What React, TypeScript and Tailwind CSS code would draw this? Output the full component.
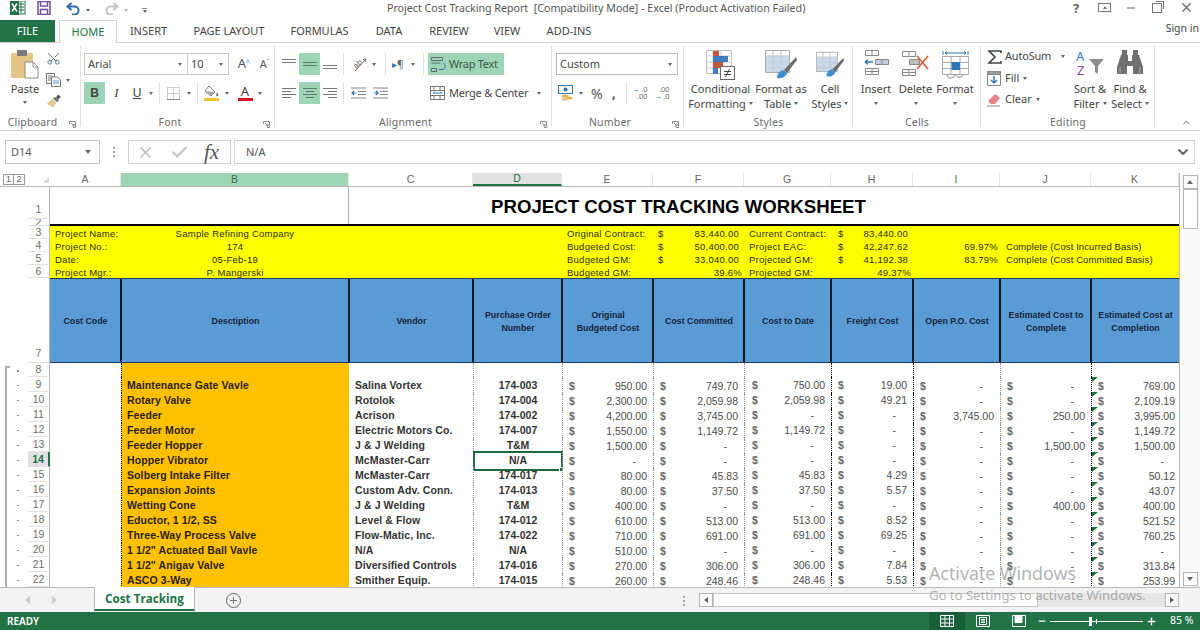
import { Scissors, ChevronUp, ChevronDown, Plus, Minus, X, Check } from 'lucide-react'
import type { ReactNode } from 'react'

const COLS = 'grid grid-cols-[71px_228px_124px_89px_91px_91px_87px_82px_87px_91px_88px] w-[1129px]'

type Row = [number, string, string, string, string, string, string, string, string, string, string]

const ROWS: Row[] = [
  [9, 'Maintenance Gate Vavle', 'Salina Vortex', '174-003', '950.00', '749.70', '750.00', '19.00', '-', '-', '769.00'],
  [10, 'Rotary Valve', 'Rotolok', '174-004', '2,300.00', '2,059.98', '2,059.98', '49.21', '-', '-', '2,109.19'],
  [11, 'Feeder', 'Acrison', '174-002', '4,200.00', '3,745.00', '-', '-', '3,745.00', '250.00', '3,995.00'],
  [12, 'Feeder Motor', 'Electric Motors Co.', '174-007', '1,550.00', '1,149.72', '1,149.72', '-', '-', '-', '1,149.72'],
  [13, 'Feeder Hopper', 'J & J Welding', 'T&M', '1,500.00', '-', '-', '-', '-', '1,500.00', '1,500.00'],
  [14, 'Hopper Vibrator', 'McMaster-Carr', 'N/A', '-', '-', '-', '-', '-', '-', '-'],
  [15, 'Solberg Intake Filter', 'McMaster-Carr', '174-017', '80.00', '45.83', '45.83', '4.29', '-', '-', '50.12'],
  [16, 'Expansion Joints', 'Custom Adv. Conn.', '174-013', '80.00', '37.50', '37.50', '5.57', '-', '-', '43.07'],
  [17, 'Wetting Cone', 'J & J Welding', 'T&M', '400.00', '-', '-', '-', '-', '400.00', '400.00'],
  [18, 'Eductor, 1 1/2, SS', 'Level & Flow', '174-012', '610.00', '513.00', '513.00', '8.52', '-', '-', '521.52'],
  [19, 'Three-Way Process Valve', 'Flow-Matic, Inc.', '174-022', '710.00', '691.00', '691.00', '69.25', '-', '-', '760.25'],
  [20, '1 1/2" Actuated Ball Vavle', 'N/A', 'N/A', '510.00', '-', '-', '-', '-', '-', '-'],
  [21, '1 1/2" Anigav Valve', 'Diversified Controls', '174-016', '270.00', '306.00', '306.00', '7.84', '-', '-', '313.84'],
  [22, 'ASCO 3-Way', 'Smither Equip.', '174-015', '260.00', '248.46', '248.46', '5.53', '-', '-', '253.99'],
]

const Caret = ({ className = '' }: { className?: string }) => (
  <span className={`inline-block w-0 h-0 border-x-[2.5px] border-x-transparent border-t-[3px] border-t-[#666] ${className}`} />
)

const Sep = ({ className = '' }: { className?: string }) => <span className={`w-px h-[22px] bg-[#e1e1e1] ${className}`} />

function Lines({ rows, w = 14, active = false }: { rows: [number, number, number][]; w?: number; active?: boolean }) {
  return (
    <svg width={w} height="14" viewBox={`0 0 ${w} 14`} stroke={active ? '#5c7a69' : '#777'} strokeWidth="1">
      {rows.map(([y, a, b]) => (
        <line key={y} x1={a} x2={b} y1={y + 0.5} y2={y + 0.5} />
      ))}
    </svg>
  )
}

function ExcelLogo() {
  return (
    <svg width="16" height="14" viewBox="0 0 16 14">
      <rect x="6" y="0" width="9" height="13" fill="#fff" stroke="#1e7145" />
      <path d="M9 3h5M9 6h5M9 9h5M11 1v11" stroke="#1e7145" />
      <rect x="0" y="0" width="9" height="14" fill="#1e7145" />
      <path d="M2 2.5l5 8M7 2.5l-5 8" stroke="#fff" strokeWidth="1.6" />
    </svg>
  )
}

function SaveIcon() {
  return (
    <svg width="14" height="14" viewBox="0 0 14 14" fill="none" stroke="#7a4f9e" strokeWidth="1.5">
      <path d="M1 0.5h12v13H1z" />
      <path d="M3.5 1v4h7V1M3.5 13V8.5h7V13" />
    </svg>
  )
}

function UndoIcon({ color }: { color: string }) {
  return (
    <svg width="15" height="13" viewBox="0 0 15 13" fill="none" stroke={color} strokeWidth="2">
      <path d="M5.5 1L1.5 4.5 5.5 8" />
      <path d="M2 4.5h6.5a4 4 0 0 1 0 8H6" />
    </svg>
  )
}

function RedoIcon() {
  return (
    <svg width="15" height="13" viewBox="0 0 15 13" fill="none" stroke="#c4c4c4" strokeWidth="2">
      <path d="M9.5 1l4 3.5-4 3.5" />
      <path d="M13 4.5H6.5a4 4 0 0 0 0 8H9" />
    </svg>
  )
}

function PasteIcon() {
  return (
    <svg width="28" height="30" viewBox="0 0 28 30">
      <rect x="0" y="3" width="22" height="25" rx="1" fill="#e6c58a" />
      <rect x="6" y="0" width="10" height="6" rx="1" fill="#7b7b7b" />
      <path d="M14 12h8l5 5v11H14z" fill="#fff" stroke="#8c8c8c" />
      <path d="M22 12v5h5" fill="none" stroke="#8c8c8c" />
    </svg>
  )
}

function CopyIcon() {
  return (
    <svg width="15" height="14" viewBox="0 0 15 14" fill="#fff" stroke="#777">
      <path d="M0.5 0.5h8v10h-8z" />
      <path d="M2 3h5M2 5h5M2 7h5" />
      <path d="M5.5 4h6l3 3v6.5h-9z" />
      <path d="M7 8h6M7 10h6" stroke="#5b9bd5" />
    </svg>
  )
}

function BrushIcon() {
  return (
    <svg width="16" height="14" viewBox="0 0 16 14">
      <path d="M9 3l4 3.5-2 1.5-4-3.5z" fill="#6b6b6b" />
      <path d="M12 0.5l3 2.5-3 2.5-2-2z" fill="#555" />
      <path d="M6.5 5l4 3.5-3.5 5L1 9.5z" fill="#e6c58a" />
    </svg>
  )
}

function BorderIcon() {
  return (
    <svg width="13" height="13" viewBox="0 0 13 13" fill="none" stroke="#9a9a9a" strokeDasharray="1 1">
      <path d="M0.5 0.5h12v12h-12zM6.5 0.5v12M0.5 6.5h12" />
      <path d="M0 12.5h13" stroke="#888" strokeDasharray="none" />
    </svg>
  )
}

function FillIcon() {
  return (
    <svg width="17" height="16" viewBox="0 0 17 16">
      <path d="M6 1l6 6-4 4-6-5z" fill="#fff" stroke="#777" />
      <path d="M2 6l10 1-4 4z" fill="#a8a8a8" />
      <path d="M14 7c1 2 2 3 1 4s-2 0-2-1z" fill="#777" />
      <rect x="1" y="13" width="15" height="3" fill="#f1c232" />
    </svg>
  )
}

function OrientIcon() {
  return (
    <svg width="16" height="16" viewBox="0 0 16 16" fill="none" stroke="#777">
      <text x="1" y="11" fontSize="8" fill="#666" stroke="none" transform="rotate(-45 5 8)" fontFamily="Liberation Sans">ab</text>
      <path d="M3 15L14 3M14 3l-3 .5M14 3l-.5 3" />
    </svg>
  )
}

function IndentIcon({ dir }: { dir: 'in' | 'out' }) {
  const arrow = dir === 'out' ? 'M5 7H1M3 5L1 7l2 2' : 'M1 7h4M3 5l2 2-2 2'
  return (
    <svg width="15" height="14" viewBox="0 0 15 14" fill="none">
      <path d="M0 2h15M7 5.5h8M7 8.5h8M0 12h15" stroke="#888" />
      <path d={arrow} stroke="#2f75b5" strokeWidth="1.2" />
    </svg>
  )
}

function WrapIcon() {
  return (
    <svg width="16" height="15" viewBox="0 0 16 15" fill="none" stroke="#5f6f66">
      <path d="M0.5 0.5h11v3h-11zM0.5 6h9M0.5 11.5h5v3h-5z" />
      <path d="M8 12.5h3c4 0 4-6.5 1-6.5" stroke="#2f75b5" />
    </svg>
  )
}

function MergeIcon() {
  return (
    <svg width="15" height="14" viewBox="0 0 15 14" fill="#fff" stroke="#777">
      <path d="M0.5 0.5h14v13h-14zM0.5 4.5h14M0.5 9.5h14M4 0.5v4M10 0.5v4M4 9.5v4M10 9.5v4" />
      <path d="M3 7h9M3 7l1.5-1M12 7l-1.5-1" stroke="#2f75b5" />
    </svg>
  )
}

function CurrencyIcon() {
  return (
    <svg width="17" height="16" viewBox="0 0 17 16">
      <rect x="0.5" y="0.5" width="14" height="8" fill="#fff" stroke="#2f75b5" />
      <circle cx="7.5" cy="4.5" r="2" fill="#2f75b5" />
      <ellipse cx="7" cy="11" rx="3.5" ry="1.6" fill="#e6b94e" />
      <ellipse cx="11" cy="13" rx="3.5" ry="1.6" fill="#e6b94e" />
      <ellipse cx="7" cy="14" rx="3.5" ry="1.6" fill="#e6c58a" />
    </svg>
  )
}

function DecimalIcon({ more }: { more?: boolean }) {
  return (
    <span className="relative flex flex-col items-end text-[7.5px] leading-[7px] text-[#666] font-['Liberation_Sans',sans-serif]">
      <span className="flex items-center">
        {more ? '' : <span className="text-[#2f75b5] mr-[1px]">←</span>}
        {more ? '.00' : '.0'}
      </span>
      <span className="flex items-center">
        {more && <span className="text-[#2f75b5] mr-[1px]">→</span>}
        {more ? '.0' : '.00'}
      </span>
    </span>
  )
}

function CondIcon() {
  return (
    <svg width="29" height="30" viewBox="0 0 29 30">
      <path d="M0.5 0.5h25v23h-25z" fill="#fff" stroke="#bdbdbd" />
      <path d="M7 0v24M15 0v24M0 6h26M0 12h26M0 18h26" stroke="#d0d0d0" />
      <rect x="7" y="1" width="6" height="5" fill="#c0583e" />
      <rect x="7" y="6" width="15" height="6" fill="#3f7cbf" />
      <rect x="7" y="12" width="10" height="6" fill="#c0583e" />
      <rect x="7" y="18" width="5" height="6" fill="#3f7cbf" />
      <rect x="14.5" y="16.5" width="14" height="13" fill="#fff" stroke="#666" />
      <path d="M18 21.5h7M18 24.5h7M23.5 19l-4 8" stroke="#444" />
    </svg>
  )
}

function TableIcon({ narrow }: { narrow?: boolean }) {
  return (
    <svg width={narrow ? 28 : 32} height="29" viewBox="0 0 32 29">
      <path d="M0.5 0.5h24v22h-24z" fill="#fff" stroke="#aaa" />
      <path d="M8 0v23M16 0v23M0 6h25M0 12h25M0 18h25" stroke="#bdbdbd" />
      <rect x="1" y="6" width="23" height="16" fill="#bfcfe4" opacity=".8" />
      <path d="M31 7L19 20l3 3L32 10z" fill="#6b6b6b" />
      <path d="M12 28c0-5 4-8 7-8l3 3c0 3-5 6-10 5z" fill="#3f8fd0" />
    </svg>
  )
}

function InsertIcon() {
  return (
    <svg width="26" height="25" viewBox="0 0 26 25" fill="none" stroke="#888">
      <path d="M2.5 0.5h13v5h-13zM9 0.5v5" />
      <path d="M12.5 9.5h13v5h-13zM19 9.5v5" fill="#bfcfe4" />
      <path d="M2.5 18.5h13v6h-13zM9 18.5v6M2.5 21.5h13" />
      <path d="M10 12H2M2 12l3-2.5M2 12l3 2.5" stroke="#2f75b5" strokeWidth="1.3" />
    </svg>
  )
}

function DeleteIcon() {
  return (
    <svg width="28" height="26" viewBox="0 0 28 26" fill="none" stroke="#888">
      <path d="M0.5 1.5h13v5h-13zM7 1.5v5" />
      <path d="M7.5 9.5h10v5h-10z" fill="#bfbfbf" />
      <path d="M0.5 19.5h13v6h-13zM7 19.5v6M0.5 22.5h13" />
      <path d="M15 6l11 13M26 6L15 19" stroke="#d2603a" strokeWidth="1.7" />
    </svg>
  )
}

function FormatIcon() {
  return (
    <svg width="27" height="29" viewBox="0 0 27 29" fill="none" stroke="#aaa">
      <path d="M0.5 6.5h26v18h-26zM9 6.5v18M18 6.5v18M0.5 12.5h26M0.5 18.5h26" />
      <rect x="9.5" y="12" width="8.5" height="8" fill="#2f75b5" stroke="none" />
      <path d="M1 1v4M26 1v4M3 3h21M3 3l2-1.5M3 3l2 1.5M24 3l-2-1.5M24 3l-2 1.5" stroke="#2f75b5" />
      <path d="M5 25c0 4 7 4 8 0M14 25c0 3 6 3 7 0" stroke="#888" />
    </svg>
  )
}

function FillDownIcon() {
  return (
    <svg width="14" height="15" viewBox="0 0 14 15" fill="#fff" stroke="#888">
      <path d="M0.5 0.5h13v14h-13z" />
      <path d="M0.5 0.5h13v3h-13z" fill="#999" />
      <path d="M7 5v7M4 9l3 3 3-3" stroke="#2f75b5" strokeWidth="1.4" fill="none" />
    </svg>
  )
}

function EraserIcon() {
  return (
    <svg width="14" height="14" viewBox="0 0 14 14">
      <path d="M8 1l5 4-5 6H4L1 8z" fill="#e8838a" />
      <path d="M0 13h13" stroke="#888" />
    </svg>
  )
}

function SigmaIcon() {
  return (
    <svg width="15" height="14" viewBox="0 0 15 14" fill="none" stroke="#444" strokeWidth="1.6">
      <path d="M14 3V1H2l6 6-6 6h12v-2" />
    </svg>
  )
}

function SortIcon() {
  return (
    <svg width="29" height="26" viewBox="0 0 29 26">
      <text x="0" y="11" fontSize="13" fill="#2f75b5" fontFamily="Noto Sans">A</text>
      <text x="1" y="25" fontSize="13" fill="#7a4f9e" fontFamily="Noto Sans">Z</text>
      <path d="M13 9h15l-6 7v8l-3-2v-6z" fill="#8c8c8c" />
    </svg>
  )
}

function BinocularsIcon() {
  return (
    <svg width="26" height="25" viewBox="0 0 26 25" fill="#707070">
      <path d="M5 0h5v5H5zM16 0h5v5h-5z" />
      <path d="M4 5h7v6h4V5h7l4 12v7H16v-8h-6v8H0v-7z" />
      <path d="M3 17v6M23 17v6" stroke="#b0b0b0" />
    </svg>
  )
}

function Launcher() {
  return (
    <svg width="7" height="7" viewBox="0 0 7 7" fill="none" stroke="#888">
      <path d="M0.5 3V0.5H6.5V6.5H4M2 2l3 3M5 3v2H3" />
    </svg>
  )
}

function Group({ width, label, launcher, children }: { width: string; label: string; launcher?: boolean; children: ReactNode }) {
  return (
    <section className={`${width} shrink-0 h-full flex flex-col relative`}>
      <div className="h-[73px] pt-[5px]">{children}</div>
      <div className={`h-[13px] flex items-center justify-center text-[10.5px] text-[#6a6a6a] tracking-[0.2px] ${launcher ? 'pr-[16px]' : ''}`}>{label}</div>
      {launcher && (
        <span className="absolute right-[5px] bottom-[2px] flex">
          <Launcher />
        </span>
      )}
      <span className="absolute right-0 top-[3px] bottom-[3px] w-px bg-[#e1e1e1]" />
    </section>
  )
}

function BigButton({ width, icon, lines, caretLine }: { width: string; icon: ReactNode; lines: string[]; caretLine?: boolean }) {
  return (
    <div className={`${width} shrink-0 flex flex-col items-center text-[11px] leading-[15px] text-[#444]`}>
      <div className="h-[32px] flex items-start justify-center pt-[2px]">{icon}</div>
      <span className="mt-[1px] whitespace-nowrap">{lines[0]}</span>
      {lines[1] ? (
        <span className="whitespace-nowrap flex items-center gap-[3px]">
          {lines[1]}
          {caretLine && <Caret />}
        </span>
      ) : (
        <span className="h-[15px] flex items-center">
          <Caret />
        </span>
      )}
    </div>
  )
}

function Ribbon() {
  return (
    <div className="h-[88px] border-b border-[#d0d0d0] flex relative">
      <Group width="w-[81px]" label="Clipboard" launcher>
        <div className="flex pl-[10px] pt-[2px]">
          <div className="w-[30px] flex flex-col items-center text-[11px] text-[#444]">
            <PasteIcon />
            <span className="leading-[15px] mt-[1px]">Paste</span>
            <span className="h-[12px] flex items-center"><Caret /></span>
          </div>
          <div className="ml-[6px] flex flex-col gap-[7px] mt-[1px]">
            <Scissors size={15} strokeWidth={1.4} className="text-[#4a6a86] -rotate-90" />
            <span className="flex items-center gap-[5px]"><CopyIcon /><Caret /></span>
            <BrushIcon />
          </div>
        </div>
      </Group>
      <Group width="w-[194px]" label="Font" launcher>
        <div className="pl-[3px] pt-[5px]">
          <div className="flex items-center h-[22px]">
            <div className="w-[105px] h-[22px] border border-[#c6c6c6] flex items-center justify-between pl-[3px] pr-[5px] text-[11px] text-[#444]">Arial<Caret /></div>
            <div className="w-[41px] h-[22px] border border-l-0 border-[#c6c6c6] flex items-center justify-between pl-[3px] pr-[5px] text-[11px] text-[#444]">10<Caret /></div>
            <span className="ml-[5px] w-[21px] text-center text-[13px] text-[#555]">A<sup className="text-[7px] text-[#2f75b5]">^</sup></span>
            <span className="w-[21px] text-center text-[11px] text-[#555]">A<sup className="text-[7px] text-[#2f75b5]">ˇ</sup></span>
          </div>
          <div className="flex items-center h-[22px] mt-[7px] text-[12px] text-[#444]">
            <span className="w-[21px] h-[22px] bg-[#9fd5b7] flex items-center justify-center font-bold font-['Liberation_Sans',sans-serif]">B</span>
            <span className="w-[21px] text-center italic font-['Liberation_Serif',serif] ml-[1px] text-[13px]">I</span>
            <span className="w-[20px] text-center underline font-['Liberation_Sans',sans-serif]">U</span>
            <Caret className="ml-[2px]" />
            <Sep className="ml-[6px]" />
            <span className="ml-[7px] flex"><BorderIcon /></span>
            <Caret className="ml-[7px]" />
            <Sep className="ml-[6px]" />
            <span className="ml-[5px] flex"><FillIcon /></span>
            <Caret className="ml-[5px]" />
            <span className="ml-[8px] w-[16px] flex flex-col items-center text-[13px] leading-[11px] text-[#444]">A<span className="w-[15px] h-[3px] bg-[#e0141e] mt-[1px]" /></span>
            <Caret className="ml-[5px]" />
          </div>
        </div>
      </Group>
      <Group width="w-[277px]" label="Alignment" launcher>
        <div className="pl-[7px] pt-[5px]">
          <div className="flex items-center h-[22px]">
            <span className="flex w-[14px]"><Lines rows={[[2, 0, 14], [5, 0, 14]]} /></span>
            <span className="ml-[3px] w-[21px] h-[22px] bg-[#9fd5b7] flex items-center justify-center"><Lines rows={[[5, 0, 14], [8, 0, 14]]} active /></span>
            <span className="ml-[3px] flex"><Lines rows={[[8, 0, 14], [11, 0, 14]]} /></span>
            <Sep className="ml-[6px]" />
            <span className="ml-[8px] flex"><OrientIcon /></span>
            <Caret className="ml-[4px]" />
            <Sep className="ml-[9px]" />
            <span className="ml-[6px] text-[10px] text-[#666] flex items-center w-[17px]"><span className="text-[#2f75b5]">▸</span>¶</span>
            <Caret className="ml-[2px]" />
            <Sep className="ml-[8px]" />
            <span className="ml-[4px] w-[76px] h-[22px] bg-[#9fd5b7] flex items-center gap-[2px] pl-[3px] text-[11px] tracking-[-0.3px] text-[#3d5a4a] whitespace-nowrap"><WrapIcon />Wrap Text</span>
          </div>
          <div className="flex items-center h-[22px] mt-[7px]">
            <span className="flex w-[14px]"><Lines rows={[[2, 0, 14], [5, 0, 9], [8, 0, 14], [11, 0, 9]]} /></span>
            <span className="ml-[3px] w-[21px] h-[22px] bg-[#9fd5b7] flex items-center justify-center"><Lines rows={[[2, 0, 14], [5, 3, 11], [8, 0, 14], [11, 3, 11]]} active /></span>
            <span className="ml-[3px] flex"><Lines rows={[[2, 0, 14], [5, 5, 14], [8, 0, 14], [11, 5, 14]]} /></span>
            <Sep className="ml-[6px]" />
            <span className="ml-[7px] flex"><IndentIcon dir="out" /></span>
            <span className="ml-[7px] flex"><IndentIcon dir="in" /></span>
            <span className="ml-[42px] flex"><MergeIcon /></span>
            <span className="ml-[4px] text-[11px] tracking-[-0.2px] text-[#444] whitespace-nowrap">Merge &amp; Center</span>
            <Caret className="ml-[9px]" />
          </div>
        </div>
      </Group>
      <Group width="w-[132px]" label="Number" launcher>
        <div className="pl-[4px] pt-[5px]">
          <div className="w-[122px] h-[22px] border border-[#b9b9b9] flex items-center justify-between pl-[3px] pr-[5px] text-[11px] text-[#444]">Custom<Caret /></div>
          <div className="flex items-center h-[22px] mt-[7px] text-[#555]">
            <span className="ml-[2px] flex"><CurrencyIcon /></span>
            <Caret className="ml-[4px]" />
            <span className="ml-[8px] text-[14px]">%</span>
            <span className="ml-[9px] text-[14px] font-bold leading-[10px]">,</span>
            <Sep className="ml-[10px]" />
            <span className="ml-[6px] w-[16px] flex"><DecimalIcon /></span>
            <span className="ml-[6px] w-[16px] flex"><DecimalIcon more /></span>
          </div>
        </div>
      </Group>
      <Group width="w-[169px]" label="Styles">
        <div className="flex pl-[6px]">
          <BigButton width="w-[61px]" icon={<CondIcon />} lines={['Conditional', 'Formatting']} caretLine />
          <BigButton width="w-[60px]" icon={<TableIcon />} lines={['Format as', 'Table']} caretLine />
          <BigButton width="w-[38px]" icon={<TableIcon narrow />} lines={['Cell', 'Styles']} caretLine />
        </div>
      </Group>
      <Group width="w-[128px]" label="Cells">
        <div className="flex pl-[3px]">
          <BigButton width="w-[40px]" icon={<InsertIcon />} lines={['Insert']} />
          <BigButton width="w-[39px]" icon={<DeleteIcon />} lines={['Delete']} />
          <BigButton width="w-[40px]" icon={<FormatIcon />} lines={['Format']} />
        </div>
      </Group>
      <Group width="w-[174px]" label="Editing">
        <div className="flex pl-[6px] text-[11px] text-[#444]">
          <div className="w-[83px] flex flex-col">
            <span className="h-[21px] flex items-center gap-[3px] -mt-[2px] tracking-[-0.2px]">
              <SigmaIcon />AutoSum<Caret className="ml-[7px]" />
            </span>
            <span className="h-[22px] flex items-center gap-[4px]"><FillDownIcon />Fill<Caret /></span>
            <span className="h-[21px] flex items-center gap-[4px]"><EraserIcon />Clear<Caret /></span>
          </div>
          <BigButton width="w-[40px]" icon={<SortIcon />} lines={['Sort &', 'Filter']} caretLine />
          <BigButton width="w-[40px]" icon={<BinocularsIcon />} lines={['Find &', 'Select']} caretLine />
        </div>
      </Group>
      <ChevronUp size={11} strokeWidth={2} className="absolute left-[1181px] bottom-[2px] text-[#666]" />
    </div>
  )
}

function FormulaBar() {
  return (
    <div className="h-[42px] pt-[9px] pb-[9px] pl-[5px] pr-[5px] flex items-stretch">
      <div className="w-[95px] border border-[#c6c6c6] flex items-center justify-between pl-[5px] pr-[8px] text-[11px] text-[#555]">D14<Caret className="border-t-[4px]! border-x-[3px]!" /></div>
      <div className="w-[28px] flex justify-center items-center text-[#aaa] text-[10px] tracking-tighter"><span className="leading-[4px] w-[2px] flex flex-col gap-[2px]"><i className="w-[2px] h-[2px] bg-[#aaa]" /><i className="w-[2px] h-[2px] bg-[#aaa]" /><i className="w-[2px] h-[2px] bg-[#aaa]" /></span></div>
      <div className="w-[103px] border border-[#d0d0d0] flex items-center pl-[7px] gap-[15px]">
        <X size={19} strokeWidth={2} className="text-[#bcbcbc]" />
        <Check size={19} strokeWidth={3} className="text-[#c8c8c8]" />
        <span className="font-['Liberation_Serif',serif] italic text-[21px] leading-[20px] text-[#555]">fx</span>
      </div>
      <div className="ml-[3px] flex-1 border border-[#d0d0d0] flex items-center justify-between pl-[11px] pr-[3px] text-[11px] text-[#555]">
        N/A
        <ChevronDown size={16} strokeWidth={3} className="text-[#666]" />
      </div>
    </div>
  )
}

function Gutter({ n, h, tick = true, first = false, end = false, active = false }: { n?: number; h: string; tick?: boolean; first?: boolean; end?: boolean; active?: boolean }) {
  return (
    <div className={`${h} w-[50px] shrink-0 flex`}>
      <div className="w-[28px] relative overflow-hidden">
        {tick && <span className="absolute left-[17px] top-1/2 w-[1.5px] h-[1.5px] bg-[#888]" />}
        {tick && <span className={`absolute left-[5px] bottom-0 w-[1.5px] bg-[#b0b0b0] ${first ? 'top-[3px]' : 'top-0'}`} />}
        {first && <span className="absolute left-[5px] top-[3px] w-[5px] h-[1.5px] bg-[#b0b0b0]" />}
      </div>
      <div
        className={`w-[22px] flex justify-center overflow-hidden text-[10.5px] font-['Liberation_Sans',sans-serif] border-b border-[#e2e2e2] ${end ? 'items-end' : 'items-center pt-[1px]'} ${active ? 'bg-[#e1e1e1] text-[#217346] font-bold border-r-2 border-r-[#217346]' : 'text-[#6e6e6e] border-r border-r-[#b8b8b8]'}`}
      >
        {n}
      </div>
    </div>
  )
}

function ColHeaders() {
  const cols: [string, string][] = [
    ['A', 'text-[#666]'],
    ['B', 'bg-[#9fd5b7] text-[#3b6a52]'],
    ['C', 'text-[#666]'],
    ['D', 'bg-[#e1e1e1] text-[#217346] border-b-2 border-b-[#217346]'],
    ['E', 'text-[#666]'],
    ['F', 'text-[#666]'],
    ['G', 'text-[#666]'],
    ['H', 'text-[#666]'],
    ['I', 'text-[#666]'],
    ['J', 'text-[#666]'],
    ['K', 'text-[#666]'],
  ]
  return (
    <div className="flex h-[14px] border-b border-[#b8b8b8]">
      <div className="w-[50px] shrink-0 flex items-center pl-[3px]">
        <span className="w-[11px] h-[11px] border border-[#999] flex items-center justify-center text-[9px] text-[#666]">1</span>
        <span className="w-[11px] h-[11px] border border-l-0 border-[#999] flex items-center justify-center text-[9px] text-[#666]">2</span>
        <span className="ml-[18px] w-0 h-0 border-b-[6px] border-l-[6px] border-b-[#d8d8d8] border-l-transparent" />
      </div>
      <div className={COLS}>
        {cols.map(([c, cls]) => (
          <div key={c} className={`h-[13px] flex items-center justify-center text-[10.5px] border-r border-r-[#e6e6e6] font-['Liberation_Sans',sans-serif] ${cls}`}>{c}</div>
        ))}
      </div>
    </div>
  )
}

function TitleRow() {
  return (
    <div className="flex h-[39px]">
      <div className="flex flex-col">
        <Gutter n={1} h="h-[32px]" tick={false} end />
        <Gutter n={2} h="h-[7px]" tick={false} />
      </div>
      <div className="w-[1129px] flex border-b-2 border-black">
        <div className="w-[299px] border-r border-[#b0b0b0]" />
        <div className="flex-1 flex items-center justify-center pt-[2px] pr-[171px] text-[18.65px] font-bold text-black whitespace-nowrap">PROJECT COST TRACKING WORKSHEET</div>
      </div>
    </div>
  )
}

const YELLOW: string[][] = [
  ['Project Name:', 'Sample Refining Company', 'Original Contract:', '83,440.00', 'Current Contract:', '83,440.00', '', ''],
  ['Project No.:', '174', 'Budgeted Cost:', '50,400.00', 'Project EAC:', '42,247.62', '69.97%', 'Complete (Cost Incurred Basis)'],
  ['Date:', '05-Feb-19', 'Budgeted GM:', '33,040.00', 'Projected GM:', '41,192.38', '83.79%', 'Complete (Cost Committed Basis)'],
  ['Project Mgr.:', 'P. Mangerski', 'Budgeted GM:', '39.6%', 'Projected GM:', '49.37%', '', ''],
]

function YellowBlock() {
  return (
    <div>
      {YELLOW.map((r, i) => {
        const pct = i === 3
        return (
          <div key={r[0]} className="flex h-[13px]">
            <Gutter n={i + 3} h="h-[13px]" tick={false} />
            <div className={`${COLS} bg-[#ffff00] text-[9.5px] text-[#2c2c10] leading-[13px] tracking-[0.25px] whitespace-nowrap pt-[1px]`}>
              <div className="pl-[5px] overflow-visible">{r[0]}</div>
              <div className="text-center">{r[1]}</div>
              <div />
              <div />
              <div className="pl-[5px]">{r[2]}</div>
              <div className="flex justify-between pl-[5px] pr-[5px]">
                {!pct && <span>$</span>}
                <span className={pct ? 'ml-auto -mr-[3px]' : ''}>{r[3]}</span>
              </div>
              <div className="pl-[5px]">{r[4]}</div>
              <div className="flex justify-between pl-[7px] pr-[5px]">
                {!pct && <span>$</span>}
                <span className={pct ? 'ml-auto -mr-[3px]' : ''}>{r[5]}</span>
              </div>
              <div className="text-right pr-[2px]">{r[6]}</div>
              <div className="pl-[6px] tracking-[0.1px]">{r[7]}</div>
              <div />
            </div>
          </div>
        )
      })}
    </div>
  )
}

const HEADS: string[][] = [
  ['Cost Code'],
  ['Desctiption'],
  ['Vendor'],
  ['Purchase Order', 'Number'],
  ['Original', 'Budgeted Cost'],
  ['Cost Committed'],
  ['Cost to Date'],
  ['Freight Cost'],
  ['Open P.O. Cost'],
  ['Estimated Cost to', 'Complete'],
  ['Estimated Cost at', 'Completion'],
]

function HeaderRow() {
  return (
    <div className="flex h-[85px]">
      <Gutter n={7} h="h-[85px]" tick={false} end />
      <div className={`${COLS} bg-[#5b9bd5] border-y border-y-[#1c3f63]`}>
        {HEADS.map((lines, i) => (
          <div
            key={lines[0]}
            className={`flex flex-col items-center justify-center pt-[2px] text-[8.8px] leading-[12.5px] font-bold text-[#14263c] whitespace-nowrap ${i > 0 ? 'border-l-2 border-l-[#101820] -ml-[1px]' : ''}`}
          >
            {lines.map((l) => (
              <span key={l}>{l}</span>
            ))}
          </div>
        ))}
      </div>
    </div>
  )
}

function Amount({ value, shift, right, dash, dotted, left = 'pl-[6px]', triangle }: { value: string; shift: string; right: string; dash: string; dotted: string; left?: string; triangle?: boolean }) {
  const isDash = value === '-'
  return (
    <div className={`relative flex justify-between items-center text-[10.5px] text-[#4d4d4d] border-l border-dotted ${dotted} ${shift} ${left} ${isDash ? dash : right}`}>
      {triangle && <span className="absolute left-0 top-0 w-[6px] h-[5px] bg-[#1e7145] [clip-path:polygon(0_0,100%_0,0_100%)]" />}
      <span className="font-bold text-[#666]">$</span>
      <span>{value}</span>
    </div>
  )
}

function DataRow({ row }: { row?: Row }) {
  if (!row) {
    return (
      <div className="flex h-[14px]">
        <Gutter n={8} h="h-[14px]" first />
        <div className={COLS}>
          <div />
          <div className="bg-[#ffc000] border-l border-dotted border-l-black" />
          <div />
          <div className="border-l border-dotted border-l-[#999]" />
          <div className="border-l border-dotted border-l-[#999]" />
          <div className="border-l border-dotted border-l-[#999]" />
          <div className="border-l border-dotted border-l-[#999]" />
          <div className="border-l border-dotted border-l-black" />
          <div className="border-l border-dotted border-l-black" />
          <div className="border-l border-dotted border-l-[#999]" />
          <div className="border-l border-dotted border-l-black" />
        </div>
      </div>
    )
  }
  const [n, desc, vendor, po, e, f, g, h, i, j, k] = row
  const selected = n === 14
  return (
    <div className="flex h-[15px]">
      <Gutter n={n} h="h-[15px]" active={selected} />
      <div className={`${COLS} font-['Liberation_Sans',sans-serif]`}>
        <div />
        <div className="bg-[#ffc000] border-l border-dotted border-l-black pl-[5px] flex items-center text-[10.5px] font-bold text-[#2a2310] tracking-[0.1px] whitespace-nowrap">{desc}</div>
        <div className="pl-[6px] flex items-center text-[10.5px] font-bold text-[#333] tracking-[0.1px] whitespace-nowrap">{vendor}</div>
        <div className="relative border-l border-dotted border-l-[#999] flex items-center justify-center text-[10.5px] font-bold text-[#333]">
          {po}
          {selected && (
            <span className="absolute -left-[1px] -right-[1px] -top-[1px] -bottom-[1px] border-2 border-[#1e6b3f]">
              <span className="absolute -right-[3px] -bottom-[3px] w-[5px] h-[5px] bg-[#1e6b3f] border border-white" />
            </span>
          )}
        </div>
        <Amount value={e} shift="pt-[2px]" right="pr-[6px]" dash="pr-[17px]" dotted="border-l-[#999]" />
        <Amount value={f} shift="pt-[2px]" right="pr-[6px]" dash="pr-[17px]" dotted="border-l-[#999]" />
        <Amount value={g} shift="pb-[1px]" right="pr-[6px]" dash="pr-[17px]" dotted="border-l-[#999]" left="pl-[7px]" />
        <Amount value={h} shift="pb-[1px]" right="pr-[6px]" dash="pr-[17px]" dotted="border-l-black" />
        <Amount value={i} shift="pt-[2px]" right="pr-[6px]" dash="pr-[17px]" dotted="border-l-black" />
        <Amount value={j} shift="pt-[2px]" right="pr-[6px]" dash="pr-[17px]" dotted="border-l-[#999]" />
        <Amount value={k} shift="pt-[2px]" right="pr-[4px]" dash="pr-[15px]" dotted="border-l-black" triangle />
      </div>
    </div>
  )
}

function VScroll() {
  return (
    <div className="w-[21px] shrink-0 bg-[#fafafa] flex flex-col items-center pt-[2px] border-l border-[#b8b8b8]">
      <span className="w-[15px] h-[14px] border border-[#b5b5b5] bg-white flex items-center justify-center"><span className="w-0 h-0 border-x-[3px] border-x-transparent border-b-[4px] border-b-[#666]" /></span>
      <span className="w-[15px] h-[40px] border border-[#b5b5b5] bg-white" />
      <span className="flex-1" />
      <span className="w-[15px] h-[14px] border border-[#b5b5b5] bg-white flex items-center justify-center mb-[1px]"><span className="w-0 h-0 border-x-[3px] border-x-transparent border-t-[4px] border-t-[#666]" /></span>
    </div>
  )
}

function TabBar() {
  return (
    <div className="h-[25px] bg-[#f3f3f3] border-t border-[#b8b8b8] flex items-start text-[#666]">
      <div className="w-[94px] h-full flex items-center pl-[25px] gap-[22px]">
        <span className="w-0 h-0 border-y-[4px] border-y-transparent border-r-[5px] border-r-[#c6c6c6]" />
        <span className="w-0 h-0 border-y-[4px] border-y-transparent border-l-[5px] border-l-[#c6c6c6]" />
      </div>
      <div className="w-[101px] h-[24px] pt-[1px] bg-white border-x border-[#b8b8b8] border-b-2 border-b-[#217346] flex items-center justify-center text-[11.7px] font-bold text-[#217346] font-['Open_Sans',sans-serif] whitespace-nowrap -mt-px">Cost Tracking</div>
      <span className="ml-[31px] mt-[5px] w-[15px] h-[15px] rounded-full border border-[#666] flex items-center justify-center"><Plus size={11} strokeWidth={2} /></span>
      <span className="ml-[442px] mt-[8px] flex flex-col gap-[2px]"><i className="w-[2px] h-[2px] bg-[#aaa]" /><i className="w-[2px] h-[2px] bg-[#aaa]" /><i className="w-[2px] h-[2px] bg-[#aaa]" /></span>
      <div className="ml-[14px] mt-[5px] w-[480px] h-[14px] flex bg-[#e6e6e6]">
        <span className="w-[14px] border border-[#b5b5b5] bg-white flex items-center justify-center"><span className="w-0 h-0 border-y-[3px] border-y-transparent border-r-[4px] border-r-[#666]" /></span>
        <span className="w-[325px] border border-[#c6c6c6] bg-white" />
        <span className="flex-1" />
        <span className="w-[14px] border border-[#b5b5b5] bg-white flex items-center justify-center"><span className="w-0 h-0 border-y-[3px] border-y-transparent border-l-[4px] border-l-[#666]" /></span>
      </div>
    </div>
  )
}

function StatusBar() {
  return (
    <div className="h-[18px] bg-[#217346] text-white flex items-center text-[10px]">
      <span className="pl-[7px] font-semibold">READY</span>
      <div className="ml-auto flex items-center h-full">
        <span className="w-[36px] h-full bg-[#19603a] flex items-center justify-center">
          <svg width="14" height="12" viewBox="0 0 14 12" fill="none" stroke="#fff"><path d="M.5.5h13v11H.5zM5 .5v11M9.5.5v11M.5 4h13M.5 8h13" /></svg>
        </span>
        <span className="w-[36px] flex justify-center">
          <svg width="14" height="12" viewBox="0 0 14 12" fill="none" stroke="#fff"><path d="M.5.5h13v11H.5z" /><path d="M3.5 2.5h7v7h-7z" /><path d="M5 4.5h4M5 6h4M5 7.5h4" /></svg>
        </span>
        <span className="w-[36px] flex justify-center">
          <svg width="14" height="12" viewBox="0 0 14 12" fill="none" stroke="#fff"><path d="M.5.5h13v11H.5z" /><path d="M3 .5h7v7H3z" fill="#fff" /></svg>
        </span>
        <Minus size={10} strokeWidth={3} />
        <span className="relative ml-[3px] w-[93px] h-px bg-white">
          <span className="absolute left-[39px] -top-[4px] w-[3px] h-[9px] bg-white" />
          <span className="absolute left-[46px] -top-[2px] w-px h-[5px] bg-white" />
        </span>
        <Plus size={11} strokeWidth={3} className="ml-[3px]" />
        <span className="ml-[13px] mr-[8px] w-[22px] whitespace-nowrap text-[10.5px]">85 %</span>
      </div>
    </div>
  )
}

export default function App() {
  return (
    <div className="relative w-[1200px] h-[630px] overflow-hidden bg-white flex flex-col font-['Liberation_Sans',sans-serif]">
      <div className="font-['Noto_Sans',sans-serif]">
        <div className="h-[20px] flex items-center text-[#555]">
          <div className="w-[387px] shrink-0 flex items-center pl-[10px]">
            <span className="flex -mt-[4px]"><ExcelLogo /></span>
            <span className="ml-[11px] flex -mt-[4px]"><SaveIcon /></span>
            <span className="ml-[15px] flex -mt-[4px]"><UndoIcon color="#2f6aa8" /></span>
            <Caret className="ml-[5px]" />
            <span className="ml-[14px] flex -mt-[4px]"><RedoIcon /></span>
            <Caret className="ml-[5px] opacity-50" />
            <span className="ml-[14px] flex flex-col items-center gap-[1px]"><i className="w-[5px] h-px bg-[#888]" /><Caret /></span>
          </div>
          <div className="text-[10.65px] text-[#555] whitespace-pre -mt-[2px]">Project Cost Tracking Report  [Compatibility Mode] - Excel (Product Activation Failed)</div>
          <div className="ml-auto flex items-center pr-[6px] text-[#666] -mt-[5px]">
            <span className="w-[14px] text-center text-[13px] leading-[14px] font-bold">?</span>
            <span className="ml-[15px] w-[13px] h-[9px] border border-[#777] flex items-center justify-center"><span className="w-0 h-0 border-x-[2px] border-x-transparent border-b-[3px] border-b-[#777]" /></span>
            <Minus size={12} strokeWidth={2} className="ml-[14px]" />
            <span className="ml-[15px] relative w-[10px] h-[10px] border border-[#777]"><span className="absolute -top-[3px] -right-[3px] w-[8px] h-[8px] border-t border-r border-[#777]" /></span>
            <X size={15} strokeWidth={2} className="ml-[17px]" />
          </div>
        </div>
        <div className="h-[23px] flex items-stretch text-[11px] text-[#444] border-b border-[#d0d0d0]">
          <div className="w-[55px] bg-[#217346] text-white flex items-center justify-center">FILE</div>
          <div className="ml-[4px] w-[58px] h-[23px] border border-b-0 border-[#d0d0d0] bg-white text-[#217346] flex items-center justify-center">HOME</div>
          <div className="w-[61px] ml-[1px] flex items-center justify-center">INSERT</div>
          <div className="w-[100px] flex items-center justify-center">PAGE LAYOUT</div>
          <div className="w-[81px] flex items-center justify-center">FORMULAS</div>
          <div className="w-[58px] flex items-center justify-center">DATA</div>
          <div className="w-[62px] flex items-center justify-center">REVIEW</div>
          <div className="w-[54px] flex items-center justify-center">VIEW</div>
          <div className="w-[70px] flex items-center justify-center">ADD-INS</div>
          <div className="ml-auto pr-[1px] pb-[4px] flex items-center text-[10.5px]">Sign in</div>
        </div>
        <Ribbon />
        <FormulaBar />
      </div>
      <div className="flex-1 flex min-h-0">
        <div className="w-[1179px] shrink-0 overflow-hidden">
          <ColHeaders />
          <TitleRow />
          <YellowBlock />
          <HeaderRow />
          <DataRow />
          {ROWS.map((r) => (
            <DataRow key={r[0]} row={r} />
          ))}
        </div>
        <VScroll />
      </div>
      <div className="font-['Noto_Sans',sans-serif]">
        <TabBar />
        <StatusBar />
      </div>
      <div className="absolute left-[929px] top-[561px] flex flex-col font-['Noto_Sans',sans-serif] text-[#8f8f8f]/70 pointer-events-none whitespace-nowrap">
        <span className="text-[17.8px] leading-[24px]">Activate Windows</span>
        <span className="text-[13.1px] leading-[18px] mt-[1px]">Go to Settings to activate Windows.</span>
      </div>
    </div>
  )
}
